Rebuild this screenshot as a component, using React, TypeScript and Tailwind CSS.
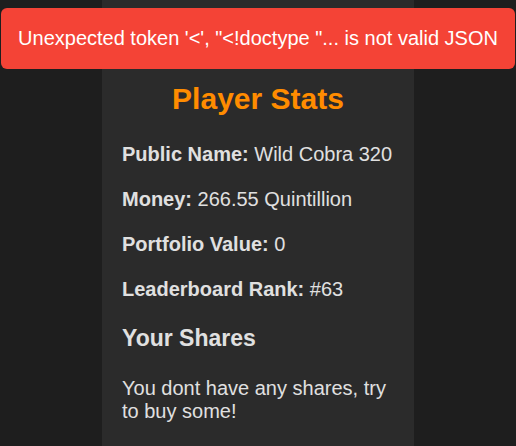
export default function App() {
  const stats = [
    { label: 'Public Name:', value: 'Wild Cobra 320' },
    { label: 'Money:', value: '266.55 Quintillion' },
    { label: 'Portfolio Value:', value: '0' },
    { label: 'Leaderboard Rank:', value: '#63' },
  ];

  return (
    <div className="relative min-h-screen h-[446px] overflow-hidden bg-[#1e1e1e] font-['Liberation_Sans',Arial,sans-serif] text-[#e0e0e0]">
      {/* Stats panel */}
      <div className="mx-auto h-full w-[312px] bg-[#2b2b2b] px-5 pt-[81px]">
        <h1 className="text-center text-[30px] leading-[36px] font-bold text-[#ff8c00]">Player Stats</h1>
        <div className="mt-[24px] flex flex-col gap-[18px]">
          {stats.map((s) => (
            <p key={s.label} className="text-[20px] leading-[27px]">
              <span className="font-bold">{s.label}</span> {s.value}
            </p>
          ))}
        </div>
        <h3 className="mt-[21px] text-[23px] leading-[28px] font-bold">Your Shares</h3>
        <p className="mt-[25px] text-[20px] leading-[23px]">You dont have any shares, try to buy some!</p>
      </div>

      {/* Error toast */}
      <div className="absolute left-[1px] right-[1px] top-[8px] flex h-[61px] items-center justify-center rounded-[6px] bg-[#f44336] pb-[2px] text-[20px] text-white">
        Unexpected token '&lt;', "&lt;!doctype "... is not valid JSON
      </div>
    </div>
  );
}
